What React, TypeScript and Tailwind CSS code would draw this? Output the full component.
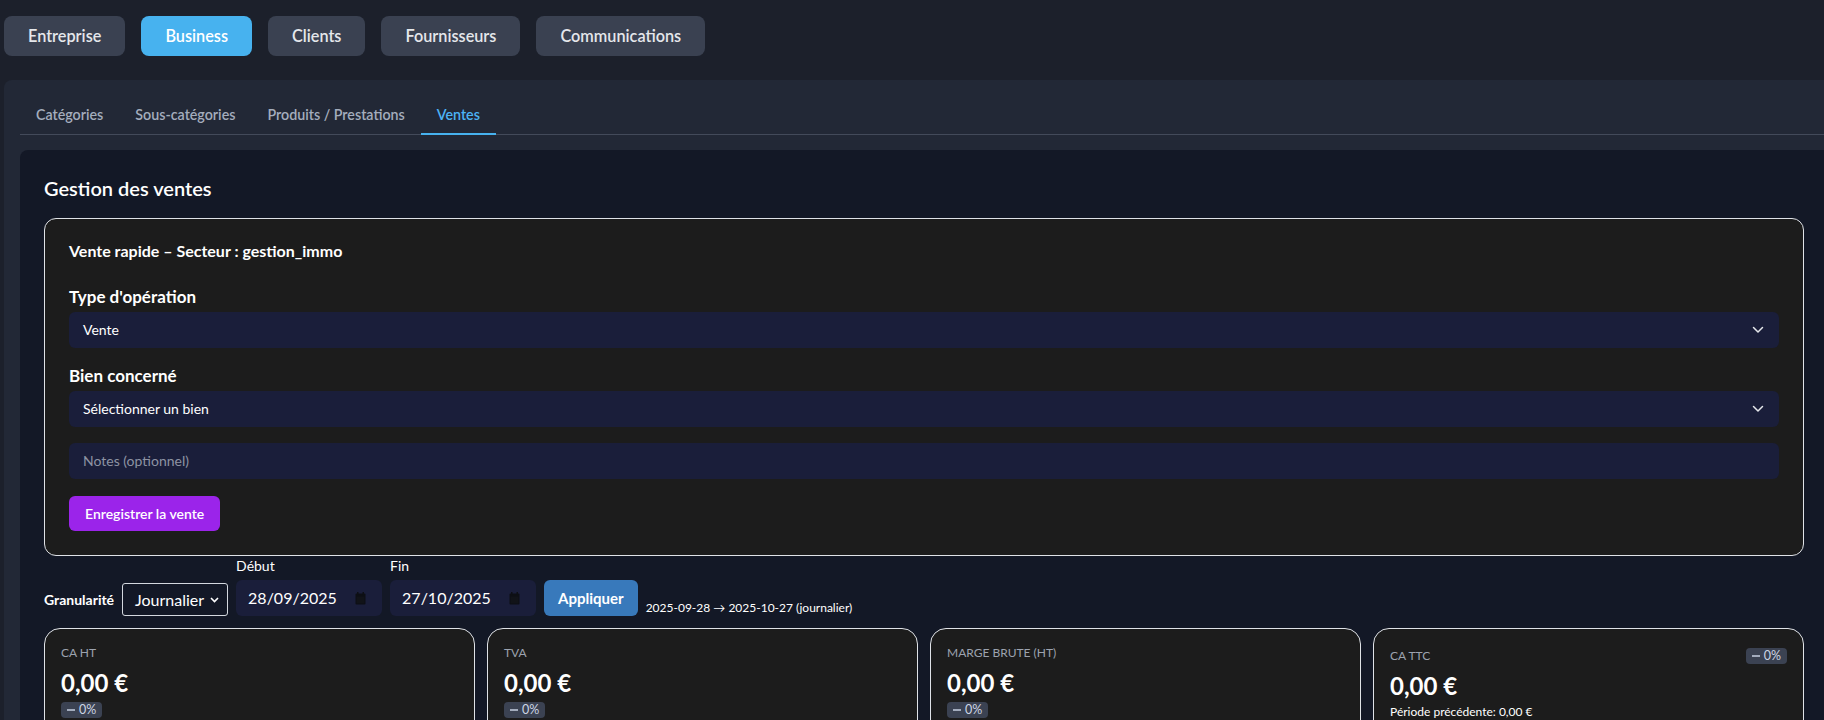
import React from "react";

const topTabs = ["Entreprise", "Business", "Clients", "Fournisseurs", "Communications"];
const subTabs = ["Catégories", "Sous-catégories", "Produits / Prestations", "Ventes"];

function Chevron() {
  return (
    <svg width="12" height="8" viewBox="0 0 12 8" fill="none">
      <polyline points="1.5,1.5 6,6 10.5,1.5" stroke="#e5e7eb" strokeWidth="1.5" strokeLinecap="round" strokeLinejoin="round" />
    </svg>
  );
}

function CalendarIcon() {
  return (
    <svg width="11" height="13" viewBox="0 0 11 13" fill="none">
      <rect x="0.5" y="1.5" width="10" height="11" rx="1" fill="#0d0f14" />
      <rect x="2" y="0" width="1.5" height="3" fill="#0d0f14" />
      <rect x="7.5" y="0" width="1.5" height="3" fill="#0d0f14" />
      <rect x="1.5" y="4.5" width="8" height="7" fill="#111318" />
    </svg>
  );
}

function Badge() {
  return (
    <div className="flex h-4 items-center gap-1 rounded bg-[#3b4252] px-1.5">
      <span className="block h-[2px] w-2 bg-[#a3acbd]" />
      <span className="text-[12.5px] leading-4 text-[#cdd6e4]">0%</span>
    </div>
  );
}

function Kpi({ label }: { label: string }) {
  return (
    <div className="h-[140px] rounded-2xl border border-[#dfe2e7] bg-[#1c1c1c] p-4">
      <div className="text-xs uppercase leading-4 text-[#9ca3af]">{label}</div>
      <div className="mt-1.5 text-2xl font-bold leading-8 text-white">0,00 €</div>
      <div className="mt-[3px] flex">
        <Badge />
      </div>
    </div>
  );
}

export default function App() {
  return (
    <div className="h-screen w-full overflow-hidden bg-[#1c202b] font-['Lato',sans-serif] text-white">
      <div className="flex gap-4 pl-1 pt-4">
        {topTabs.map((t) => (
          <button
            key={t}
            className={
              t === "Business"
                ? "h-10 rounded-lg bg-[#47b2ef] px-6 text-[16.25px] font-semibold text-white"
                : "h-10 rounded-lg bg-[#3a4151] px-6 text-[16.25px] font-semibold text-[#e5e7eb]"
            }
          >
            {t}
          </button>
        ))}
      </div>

      <div className="ml-1 mt-6 w-[1840px] rounded-tl-lg bg-[#222836] pl-4 pt-4">
        <div className="flex border-b border-[#434a5a]">
          {subTabs.map((t) => (
            <button
              key={t}
              className={
                t === "Ventes"
                  ? "-mb-px h-[39px] border-b-2 border-[#47b2ef] px-4 text-[14.25px] font-semibold text-[#4cb3f5]"
                  : "-mb-px h-[39px] border-b-2 border-transparent px-4 text-[14.25px] font-semibold text-[#a4adbd]"
              }
            >
              {t}
            </button>
          ))}
        </div>

        <div className="mt-[15px] rounded-tl-lg bg-[#131826] px-6 pt-6 pb-10">
          <h2 className="text-xl font-semibold leading-7 text-white">Gestion des ventes</h2>

          <div className="mt-4 w-[1760px] rounded-xl border border-[#dfe2e7] bg-[#1c1c1c] px-6 pt-5 pb-6">
            <div className="text-base font-bold leading-6">Vente rapide – Secteur : gestion_immo</div>

            <div className="mt-[22px] text-[17px] font-bold leading-6">Type d'opération</div>
            <div className="mt-[3px] flex h-9 items-center justify-between rounded-md bg-[#1a1e3a] pl-3.5 pr-[15px] text-sm text-white">
              <span>Vente</span>
              <Chevron />
            </div>

            <div className="mt-4 text-[17px] font-bold leading-6">Bien concerné</div>
            <div className="mt-[3px] flex h-9 items-center justify-between rounded-md bg-[#1a1e3a] pl-3.5 pr-[15px] text-sm text-white">
              <span>Sélectionner un bien</span>
              <Chevron />
            </div>

            <div className="mt-4 flex h-9 items-center rounded-md bg-[#1a1e3a] px-3.5 text-sm text-[#8d93a3]">
              Notes (optionnel)
            </div>

            <button className="mt-[17px] h-[35px] rounded-md bg-[#9b24ea] px-4 text-sm font-semibold text-white">
              Enregistrer la vente
            </button>
          </div>

          <div className="flex w-[1760px] items-end gap-2">
            <div className="flex items-center gap-2">
              <span className="text-sm font-bold leading-5">Granularité</span>
              <div className="flex h-[33px] w-[106px] items-center justify-between rounded-[3px] border border-[#d4d8df] pl-3 pr-2 text-base">
                <span>Journalier</span>
                <svg width="9" height="6" viewBox="0 0 9 6" fill="none">
                  <polyline points="1,1 4.5,4.5 8,1" stroke="#ffffff" strokeWidth="1.6" />
                </svg>
              </div>
            </div>

            <div className="flex flex-col">
              <span className="text-sm leading-5">Début</span>
              <div className="mt-1 flex h-9 w-[146px] items-center justify-between rounded-md bg-[#1a1e3a] pl-3 pr-4 text-base">
                <span>28/09/2025</span>
                <CalendarIcon />
              </div>
            </div>

            <div className="flex flex-col">
              <span className="text-sm leading-5">Fin</span>
              <div className="mt-1 flex h-9 w-[146px] items-center justify-between rounded-md bg-[#1a1e3a] pl-3 pr-4 text-base">
                <span>27/10/2025</span>
                <CalendarIcon />
              </div>
            </div>

            <button className="h-9 rounded-md bg-[#3879bb] px-3.5 text-[15px] font-bold text-white">Appliquer</button>

            <span className="text-xs leading-4 text-white">2025-09-28 → 2025-10-27 (journalier)</span>
          </div>

          <div className="mt-3 grid w-[1760px] grid-cols-4 gap-3">
            <Kpi label="CA HT" />
            <Kpi label="TVA" />
            <Kpi label="Marge brute (HT)" />
            <div className="h-[140px] rounded-2xl border border-[#dfe2e7] bg-[#1c1c1c] p-4">
              <div className="flex h-[22px] items-center justify-between">
                <span className="text-xs uppercase leading-4 text-[#9ca3af]">CA TTC</span>
                <Badge />
              </div>
              <div className="mt-[3px] text-2xl font-bold leading-8 text-white">0,00 €</div>
              <div className="mt-[2px] text-xs leading-4 text-white">Période précédente: 0,00 €</div>
            </div>
          </div>
        </div>
      </div>
    </div>
  );
}
